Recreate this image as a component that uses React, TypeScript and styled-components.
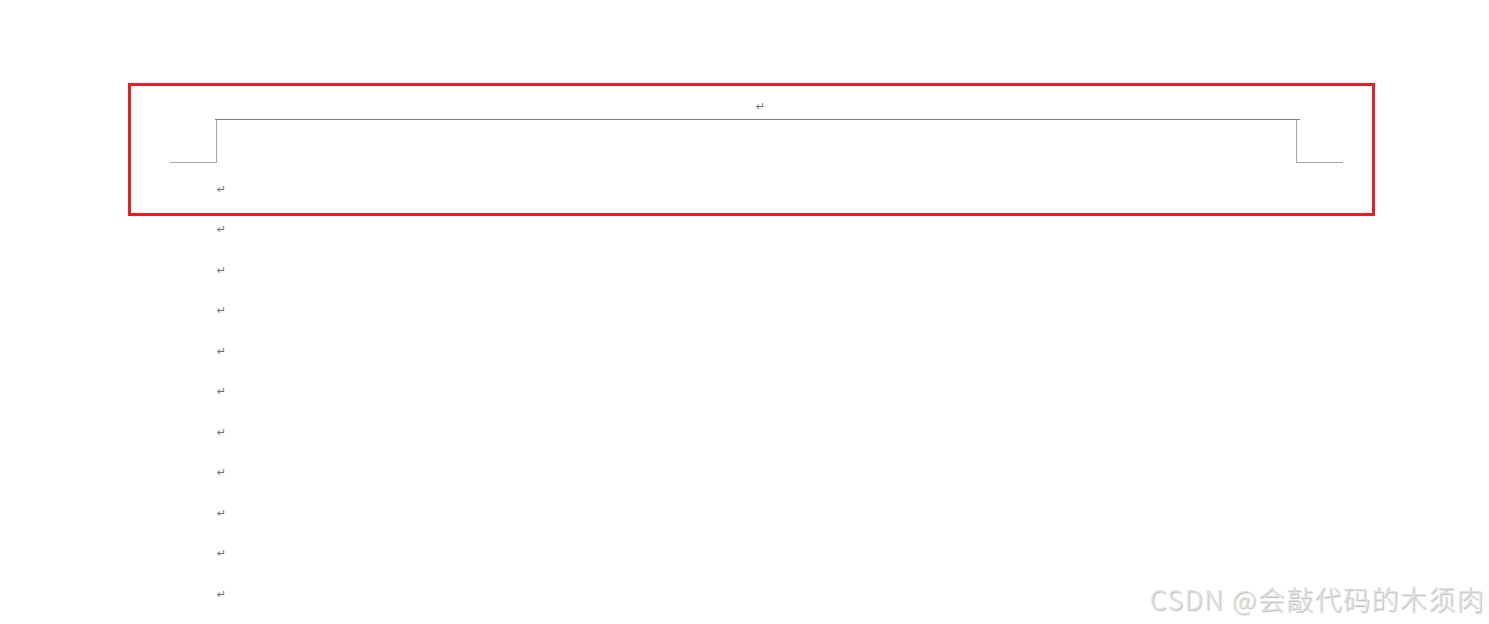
import React from "react";
import styled, { createGlobalStyle } from "styled-components";

const GlobalStyle = createGlobalStyle`
  html, body {
    margin: 0;
    padding: 0;
    background: #ffffff;
  }
  body {
    font-family: "DejaVu Sans", "Liberation Sans", sans-serif;
  }
`;

const Page = styled.div`
  position: relative;
  width: 1489px;
  height: 624px;
  overflow: hidden;
  padding: 83px 0 0 128px;
  box-sizing: border-box;
`;

const Highlight = styled.section`
  width: 1247px;
  box-sizing: border-box;
  border: 3px solid #ed1c24;
`;

const TitleLine = styled.div`
  height: 33px;
  box-sizing: border-box;
  padding: 15px 0 0 625px;
`;

const Mark = styled.span`
  display: block;
  height: 12px;
  line-height: 12px;
  font-size: 11px;
  color: #6f6f6f;
`;

const HeaderRow = styled.div`
  display: flex;
  align-items: stretch;
  height: 44px;
  padding: 0 29px 0 39px;
`;

const Cap = styled.div`
  width: 46px;
  border-bottom: 1px solid #a6a6a6;
`;

const HeaderFrame = styled.div`
  flex: 1;
  position: relative;
  border-left: 1px solid #a6a6a6;
  border-right: 1px solid #a6a6a6;

  &::before {
    content: "";
    position: absolute;
    top: 0;
    left: -2px;
    right: -4px;
    height: 1px;
    background: #808080;
  }
`;

const BoxBody = styled.div`
  padding: 21px 0 17px 86px;
`;

const List = styled.div`
  display: flex;
  flex-direction: column;
  gap: 28.5px;
  padding: 8px 0 0 89px;
`;

const Watermark = styled.div`
  position: absolute;
  right: 4px;
  bottom: 8px;
  font-family: "Noto Sans CJK SC", "Liberation Sans", sans-serif;
  font-size: 27px;
  font-weight: 300;
  letter-spacing: 1.4px;
  line-height: 34px;
  color: #e2e2e2;
  text-shadow: 1px 1px 1px #b4b4b4;
  white-space: nowrap;
`;

const marks = Array.from({ length: 10 }, (_, i) => i);

export default function App() {
  return (
    <>
      <GlobalStyle />
      <Page>
        <Highlight>
          <TitleLine>
            <Mark>↵</Mark>
          </TitleLine>
          <HeaderRow>
            <Cap />
            <HeaderFrame />
            <Cap />
          </HeaderRow>
          <BoxBody>
            <Mark>↵</Mark>
          </BoxBody>
        </Highlight>
        <List>
          {marks.map((i) => (
            <Mark key={i}>↵</Mark>
          ))}
        </List>
        <Watermark>CSDN @会敲代码的木须肉</Watermark>
      </Page>
    </>
  );
}
